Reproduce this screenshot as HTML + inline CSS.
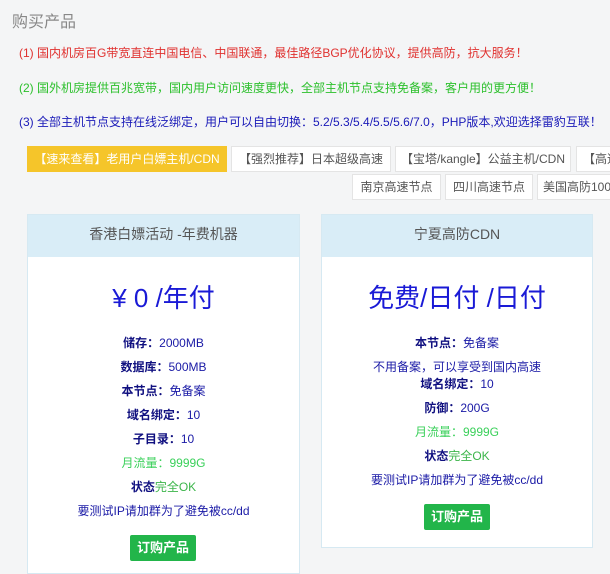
<!DOCTYPE html>
<html><head><meta charset="utf-8"><style>
body{margin:0;width:610px;height:566px;overflow:hidden;background:#f4f5f6;font-family:"Liberation Sans","Noto Sans CJK SC",sans-serif;position:relative}
.a{position:absolute;white-space:nowrap}
.t{font-size:12px}
.tab{position:absolute;height:26px;line-height:25px;background:#fff;border:1px solid #e4e4e4;font-size:12px;color:#555;text-align:center;box-sizing:border-box;white-space:nowrap;overflow:hidden}
.card{position:absolute;background:#fff;border:1px solid #d6e9f2;box-sizing:border-box}
.hd{height:42px;background:#d9edf7;line-height:38px;text-align:center;color:#555;font-size:14px}
.pr{position:absolute;left:0;right:0;text-align:center;color:#1a1ad6;font-size:26px}
.it{position:absolute;left:0;right:0;text-align:center;font-size:12px;color:#1a1aa6}
.it b{color:#101080}
.g{color:#3ad05a}
.btn{position:absolute;width:66px;height:26px;line-height:26px;background:#22b54a;color:#fff;font-weight:bold;font-size:13px;text-align:center;border-radius:2px}
</style></head><body>
<div class="a" style="left:12px;top:8px;font-size:16px;color:#888">购买产品</div>
<div class="a t" style="left:19px;top:44px;color:#e0312f">(1) 国内机房百G带宽直连中国电信、中国联通，最佳路径BGP优化协议，提供高防，抗大服务！</div>
<div class="a t" style="left:19px;top:79px;color:#2cc02c">(2) 国外机房提供百兆宽带，国内用户访问速度更快，全部主机节点支持免备案，客户用的更方便！</div>
<div class="a t" style="left:19px;top:113px;color:#1a1ab8">(3) 全部主机节点支持在线泛绑定，用户可以自由切换：5.2/5.3/5.4/5.5/5.6/7.0，PHP版本,欢迎选择雷豹互联！</div>
<div class="tab" style="left:27px;top:146px;width:200px;background:#f5c52a;border-color:#f5c52a;color:#fff">【速来查看】老用户白嫖主机/CDN</div>
<div class="tab" style="left:231px;top:146px;width:160px">【强烈推荐】日本超级高速</div>
<div class="tab" style="left:395px;top:146px;width:176px">【宝塔/kangle】公益主机/CDN</div>
<div class="tab" style="left:576px;top:146px;width:60px;text-align:left;padding-left:6px">【高速</div>
<div class="tab" style="left:352px;top:174px;width:89px">南京高速节点</div>
<div class="tab" style="left:445px;top:174px;width:88px">四川高速节点</div>
<div class="tab" style="left:537px;top:174px;width:90px;text-align:left;padding-left:5px">美国高防100</div>

<div class="card" style="left:27px;top:214px;width:273px;height:360px">
<div class="hd">香港白嫖活动 -年费机器</div>
<div class="pr" style="top:63px">¥ 0 /年付</div>
<div class="it" style="top:119px"><b>储存：</b>2000MB</div>
<div class="it" style="top:143px"><b>数据库：</b>500MB</div>
<div class="it" style="top:167px"><b>本节点：</b>免备案</div>
<div class="it" style="top:191px"><b>域名绑定：</b>10</div>
<div class="it" style="top:215px"><b>子目录：</b>10</div>
<div class="it g" style="top:239px">月流量：9999G</div>
<div class="it" style="top:263px"><b>状态</b><span style="color:#3cb54a">完全OK</span></div>
<div class="it" style="top:287px">要测试IP请加群为了避免被cc/dd</div>
<div class="btn" style="left:102px;top:320px">订购产品</div>
</div>

<div class="card" style="left:321px;top:214px;width:272px;height:334px">
<div class="hd">宁夏高防CDN</div>
<div class="pr" style="top:63px">免费/日付 /日付</div>
<div class="it" style="top:119px"><b>本节点：</b>免备案</div>
<div class="it" style="top:143px">不用备案，可以享受到国内高速</div>
<div class="it" style="top:160px"><b>域名绑定：</b>10</div>
<div class="it" style="top:184px"><b>防御：</b>200G</div>
<div class="it g" style="top:208px">月流量：9999G</div>
<div class="it" style="top:232px"><b>状态</b><span style="color:#3cb54a">完全OK</span></div>
<div class="it" style="top:256px">要测试IP请加群为了避免被cc/dd</div>
<div class="btn" style="left:102px;top:289px">订购产品</div>
</div>
</body></html>
